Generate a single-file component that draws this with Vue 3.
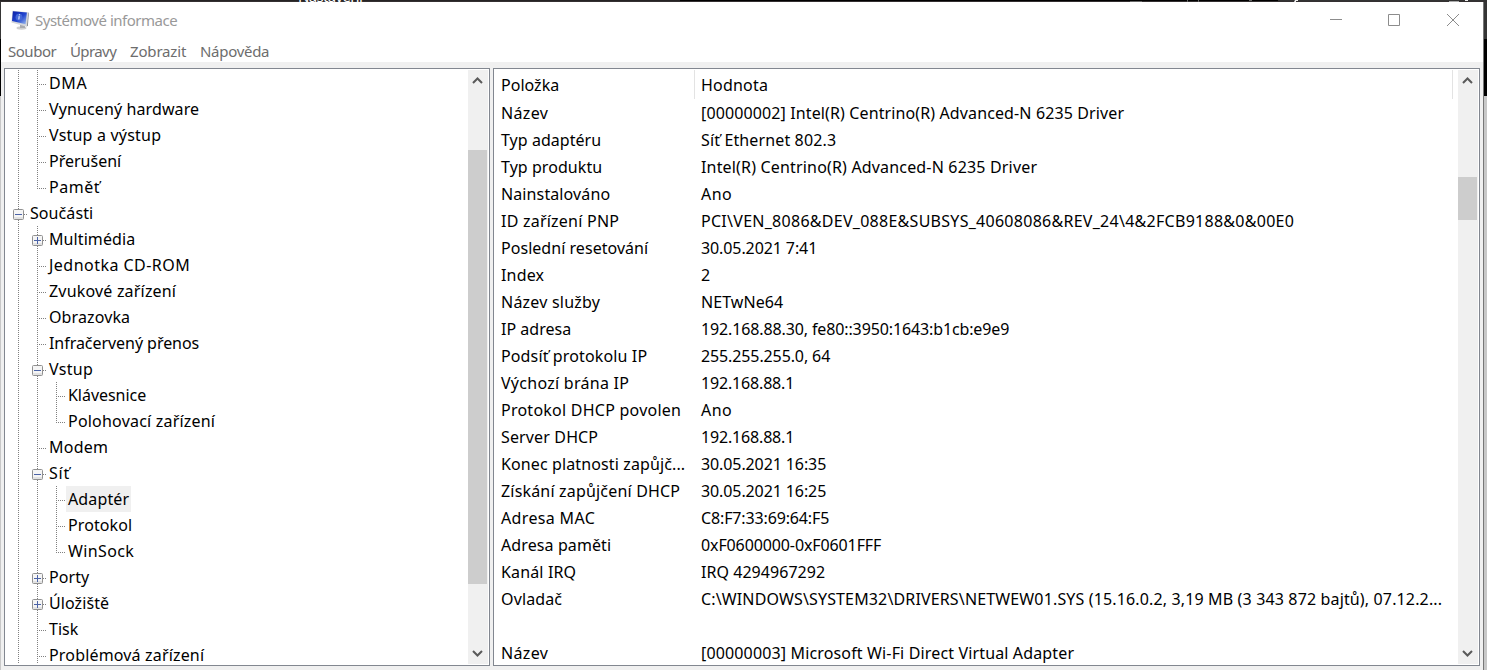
<script setup>
const menu = [
  { text: 'Soubor', width: 48 },
  { text: 'Úpravy', width: 46 },
  { text: 'Zobrazit', width: 56 },
  { text: 'Nápověda', width: 69 },
]

// guides: v = vertical line, t = branch, l = last branch, p = plus box, m = minus box
const tree = [
  ['vt', 'DMA', 38],
  ['vt', 'Vynucený hardware', 150],
  ['vt', 'Vstup a výstup', 112],
  ['vt', 'Přerušení', 72],
  ['vl', 'Paměť', 51],
  ['m', 'Součásti', 63],
  ['vp', 'Multimédia', 86],
  ['vt', 'Jednotka CD-ROM', 141],
  ['vt', 'Zvukové zařízení', 127],
  ['vt', 'Obrazovka', 81],
  ['vt', 'Infračervený přenos', 150],
  ['vm', 'Vstup', 44],
  ['vvt', 'Klávesnice', 78],
  ['vvl', 'Polohovací zařízení', 147],
  ['vt', 'Modem', 59],
  ['vm', 'Síť', 21],
  ['vvt', 'Adaptér', 61],
  ['vvt', 'Protokol', 64],
  ['vvl', 'WinSock', 66],
  ['vp', 'Porty', 40],
  ['vp', 'Úložiště', 60],
  ['vt', 'Tisk', 29],
  ['vt', 'Problémová zařízení', 155],
].map(([guides, text, width]) => ({ guides: guides.split(''), text, width }))

const rows = [
  ['Název', 47, '[00000002] Intel(R) Centrino(R) Advanced-N 6235 Driver', 423],
  ['Typ adaptéru', 100, 'Síť Ethernet 802.3', 135],
  ['Typ produktu', 101, 'Intel(R) Centrino(R) Advanced-N 6235 Driver', 336],
  ['Nainstalováno', 109, 'Ano', 31],
  ['ID zařízení PNP', 118, 'PCI\\VEN_8086&DEV_088E&SUBSYS_40608086&REV_24\\4&2FCB9188&0&00E0', 593],
  ['Poslední resetování', 147, '30.05.2021 7:41', 116],
  ['Index', 43, '2', 9],
  ['Název služby', 99, 'NETwNe64', 82],
  ['IP adresa', 70, '192.168.88.30, fe80::3950:1643:b1cb:e9e9', 308],
  ['Podsíť protokolu IP', 146, '255.255.255.0, 64', 129],
  ['Výchozí brána IP', 128, '192.168.88.1', 93],
  ['Protokol DHCP povolen', 180, 'Ano', 31],
  ['Server DHCP', 97, '192.168.88.1', 93],
  ['Konec platnosti zapůjč...', 184, '30.05.2021 16:35', 125],
  ['Získání zapůjčení DHCP', 179, '30.05.2021 16:25', 125],
  ['Adresa MAC', 94, 'C8:F7:33:69:64:F5', 128],
  ['Adresa paměti', 110, '0xF0600000-0xF0601FFF', 180],
  ['Kanál IRQ', 75, 'IRQ 4294967292', 124],
  ['Ovladač', 61, 'C:\\WINDOWS\\SYSTEM32\\DRIVERS\\NETWEW01.SYS (15.16.0.2, 3,19 MB (3 343 872 bajtů), 07.12.2...', 741],
  ['', 0, '', 0],
  ['Název', 47, '[00000003] Microsoft Wi-Fi Direct Virtual Adapter', 373],
]

// Tracks each string so that it fills the given width in pixels
const vFit = {
  mounted(el, { value }) {
    if (!value) return
    const n = el.textContent.length
    const natural = el.getBoundingClientRect().width
    el.style.letterSpacing = `${(value + 0.2 - natural) / n}px`
  },
}
</script>

<template>
  <div class="desktop">
    <div class="behind-top">
      <span class="behind-title" v-fit="64">Nastavení</span>
      <svg class="behind-marks" width="360" height="2" viewBox="0 0 360 2">
        <path d="M3 1h12v1H3zM60 0h1v2h-1zM71 0h1v2h-1zM122 0h3v1h-3z" fill="#666" />
        <path d="M168 0h3v1h-2v1h-2zM338 0h3v1h-3z" fill="#eee" />
        <path d="M322 1h10v1h-10z" fill="#aaa" />
      </svg>
    </div>
    <div class="middle">
      <div class="window">
        <header class="titlebar">
          <svg class="app-icon" width="20" height="20" viewBox="0 0 20 20">
            <defs>
              <linearGradient id="screen" x1="0" y1="0" x2="1" y2="1">
                <stop offset="0" stop-color="#0a1fa8" />
                <stop offset=".55" stop-color="#2347cf" />
                <stop offset="1" stop-color="#9fc0f0" />
              </linearGradient>
            </defs>
            <ellipse cx="10.500" cy="18" rx="5" ry="1.700" fill="#cfcfcf" />
            <path d="M9 14l5 1v3H9z" fill="#a9abae" />
            <path d="M1.500 .8l15.800 1.400-1.500 14.600L.4 12.500z" fill="#d5d7db" />
            <path d="M17.300 2.200l.6.800-1 12.600-1.100 1.200z" fill="#85888e" />
            <path d="M1.900 1.300l14 1.300-1.300 11.600L1 11z" fill="url(#screen)" />
            <ellipse cx="8" cy="7.200" rx="3.400" ry="3.400" fill="#4468d8" />
            <path d="M8.500 4.200v1M8.200 6.100l-.4 3.400" stroke="#dce7ff" stroke-width="1.100" />
          </svg>
          <span class="title" v-fit="142">Systémové informace</span>
          <svg class="controls" width="140" height="20" viewBox="0 0 140 20" fill="none" stroke="#8c8c8c">
            <path d="M5 9.500h12M63.500 4.500h11v11h-11z" />
            <path d="M122 4l12 12M134 4l-12 12" />
          </svg>
        </header>
        <nav class="menu">
          <span v-for="m in menu" :key="m.text" class="menu-item" :class="'w' + m.width">
            <span v-fit="m.width">{{ m.text }}</span>
          </span>
        </nav>
        <main class="panes">
          <section class="pane tree-pane">
            <div class="tree">
              <div v-for="n in tree" :key="n.text" class="node">
                <span v-for="(g, i) in n.guides" :key="i" class="guide" :class="'g-' + g">
                  <svg v-if="g === 'p' || g === 'm'" class="box" width="11" height="11" viewBox="0 0 11 11">
                    <rect x=".5" y=".5" width="10" height="10" rx="1" fill="#f5f5f5" stroke="#919191" />
                    <path d="M1 8h9v2H1z" fill="#e2e2e2" />
                    <path d="M2 5.500h7" stroke="#4b63a7" />
                    <path v-if="g === 'p'" d="M5.500 2v7" stroke="#4b63a7" />
                  </svg>
                </span>
                <span class="label" :class="{ selected: n.text === 'Adaptér' }">
                  <span v-fit="n.width">{{ n.text }}</span>
                </span>
              </div>
            </div>
            <div class="scroll">
              <svg width="20" height="20" viewBox="0 0 20 20"><path d="M5 13l4.500-4.500L14 13" /></svg>
              <div class="thumb tree-thumb"></div>
              <svg width="20" height="20" viewBox="0 0 20 20"><path d="M5 7l4.500 4.500L14 7" /></svg>
            </div>
          </section>
          <section class="pane list-pane">
            <div class="list">
              <div class="head">
                <span class="th"><span v-fit="58">Položka</span></span>
                <span class="th wide"><span v-fit="67">Hodnota</span></span>
              </div>
              <div v-for="(r, i) in rows" :key="i" class="row">
                <span class="key"><span v-fit="r[1]">{{ r[0] }}</span></span>
                <span v-fit="r[3]">{{ r[2] }}</span>
              </div>
            </div>
            <div class="scroll">
              <svg width="20" height="20" viewBox="0 0 20 20"><path d="M5 13l4.500-4.500L14 13" /></svg>
              <div class="thumb list-thumb"></div>
              <svg width="20" height="20" viewBox="0 0 20 20"><path d="M5 7l4.500 4.500L14 7" /></svg>
            </div>
          </section>
        </main>
      </div>
    </div>
  </div>
</template>

<style>
body {
  margin: 0;
  overflow: hidden;
}
</style>

<style scoped>
.desktop {
  width: 1487px;
  height: 670px;
  overflow: hidden;
  display: flex;
  flex-direction: column;
  background: #000;
  color: #000;
  font: 16px/26px "Noto Sans", "Open Sans", sans-serif;
  white-space: pre;
}
.behind-top {
  height: 2px;
  box-sizing: border-box;
  flex: none;
  overflow: hidden;
  padding-left: 298px;
  display: flex;
  align-items: flex-end;
  background: linear-gradient(transparent 1px, #343031 1px),
    linear-gradient(90deg, #252324 680px, #000 680px 1278px, #333 1278px);
}
.behind-title {
  color: #fff;
  font-size: 15px;
  line-height: 11px;
}
.behind-marks {
  margin-left: auto;
  flex: none;
}
.middle {
  flex: 1;
  display: flex;
  padding-left: 1px;
  background: linear-gradient(#353535 37px, #000 37px 94px, #c8c8c8 94px);
}
.window {
  width: 1482px;
  height: 668px;
  background: #f0f0f0;
  border-right: 1px solid #777;
}
.titlebar {
  height: 36px;
  display: flex;
  align-items: center;
  background: #fff;
  color: #999;
  font-size: 15px;
}
.app-icon {
  margin-left: 10px;
}
.title {
  margin-left: 4px;
}
.controls {
  margin-left: auto;
  margin-right: 18px;
}
.menu {
  height: 24px;
  display: flex;
  gap: 14px;
  padding-left: 7px;
  background: #fff;
  color: #6d6d6d;
  font-size: 15px;
}
.menu-item {
  flex: none;
}
.w48 { width: 48px; }
.w46 { width: 46px; }
.w56 { width: 56px; }
.w69 { width: 69px; }
.panes {
  display: flex;
  gap: 3px;
  padding: 6px 3px 0;
}
.pane {
  box-sizing: border-box;
  height: 598px;
  border: 1px solid #828790;
  background: #fff;
  padding: 1px 1px 1px 0;
  display: flex;
  overflow: hidden;
}
.tree-pane {
  width: 486px;
}
.list-pane {
  width: 987px;
}
.tree {
  flex: 1;
  padding-left: 4px;
  overflow: hidden;
}
.node {
  display: flex;
  height: 26px;
}
.guide {
  width: 19px;
  height: 26px;
  flex: none;
  display: flex;
  --v: repeating-linear-gradient(#808080 0 1px, #fff 1px 2px);
  --h: repeating-linear-gradient(90deg, #808080 0 1px, #fff 1px 2px);
  background-repeat: no-repeat;
}
.g-v {
  background-image: var(--v);
  background-position: 9px 0;
  background-size: 1px 26px;
}
.g-t,
.g-p,
.g-m {
  background-image: var(--v), var(--h);
  background-position: 9px 0, 9px 14px;
  background-size: 1px 26px, 9px 1px;
}
.g-l {
  background-image: var(--v), var(--h);
  background-position: 9px 0, 9px 14px;
  background-size: 1px 15px, 9px 1px;
}
.box {
  margin: 9px 0 0 4px;
}
.label {
  padding: 0 2px;
}
.selected {
  background: #f0f0f0;
}
.scroll {
  width: 20px;
  flex: none;
  background: #f0f0f0;
  display: flex;
  flex-direction: column;
}
.scroll svg {
  flex: none;
  fill: none;
  stroke: #5a5a5a;
  stroke-width: 2;
}
.thumb {
  width: 19px;
  background: #cdcdcd;
}
.tree-thumb {
  margin: 60px 0 auto;
  height: 434px;
}
.list-thumb {
  margin: 87px 0 auto;
  height: 43px;
}
.list {
  flex: 1;
  overflow: hidden;
}
.head {
  display: flex;
  height: 30px;
}
.th {
  box-sizing: border-box;
  width: 201px;
  height: 29px;
  line-height: 31px;
  padding-left: 7px;
  border-right: 1px solid #e3e3e3;
}
.wide {
  width: 758px;
  padding-left: 6px;
}
.row {
  display: flex;
  height: 27px;
  line-height: 26px;
  padding-left: 7px;
}
.key {
  width: 200px;
  flex: none;
}
</style>
